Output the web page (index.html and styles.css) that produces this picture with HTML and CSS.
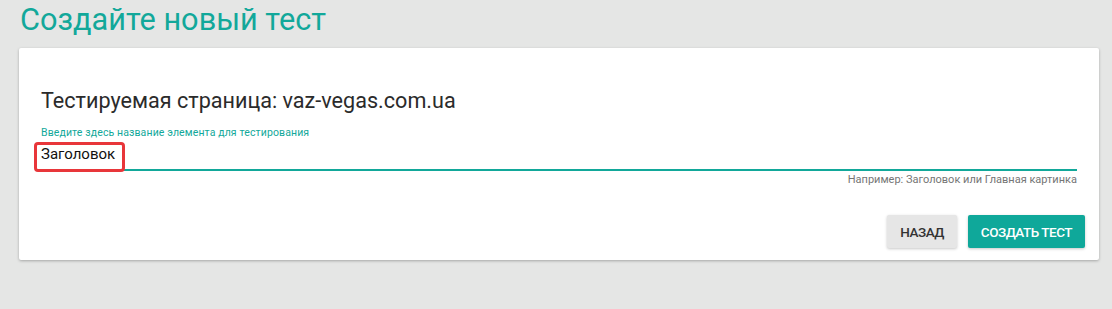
FILE: index.html
```html
<!DOCTYPE html>
<html lang="ru">
<head>
<meta charset="utf-8">
<title>Создайте новый тест</title>
<link rel="stylesheet" href="styles.css">
</head>
<body>
  <h1 class="page-title">Создайте новый тест</h1>
  <div class="card">
    <h2 class="card-heading">Тестируемая страница: vaz-vegas.com.ua</h2>
    <div class="field">
      <label class="field-label">Введите здесь название элемента для тестирования</label>
      <div class="field-input">
        <span class="field-value">Заголовок</span>
        <span class="highlight"></span>
      </div>
      <div class="field-hint">Например: Заголовок или Главная картинка</div>
    </div>
    <div class="actions">
      <button class="btn btn-flat">Назад</button>
      <button class="btn btn-primary">Создать тест</button>
    </div>
  </div>
</body>
</html>
```

FILE: styles.css
```css
html, body {
  margin: 0;
  padding: 0;
}
body {
  background: #e5e6e5;
  font-family: Roboto, "Liberation Sans", Arial, sans-serif;
  width: 1112px;
  height: 309px;
  overflow: hidden;
}
.page-title {
  margin: 0;
  padding: 2px 0 0 20px;
  font-size: 30.7px;
  line-height: 36px;
  font-weight: 400;
  color: #12a89a;
}
.card {
  margin: 10px 13px 0 19px;
  background: #fff;
  border-radius: 2px;
  box-shadow: 0 1px 3px rgba(0,0,0,0.28);
  padding: 40px 14px 12px 22px;
}
.card-heading {
  margin: 0;
  font-size: 21.6px;
  line-height: 26px;
  font-weight: 400;
  color: #2b2b2b;
}
.field {
  margin-top: 13px;
  padding-right: 8px;
}
.field-label {
  display: block;
  font-size: 10.5px;
  letter-spacing: 0.12px;
  line-height: 12px;
  color: #12a89a;
}
.field-input {
  position: relative;
  margin-top: 6px;
  padding-bottom: 6px;
  border-bottom: 2px solid #12a89a;
  font-size: 15px;
  line-height: 18px;
  color: #111;
}
.highlight {
  position: absolute;
  left: -7px;
  top: -3px;
  width: 85px;
  height: 24px;
  border: 3px solid #e8363a;
  border-radius: 4px;
}
.field-hint {
  margin-top: 3px;
  text-align: right;
  font-size: 11px;
  line-height: 12px;
  color: #757575;
}
.actions {
  margin-top: 29px;
  display: flex;
  justify-content: flex-end;
  gap: 11px;
}
.btn {
  height: 33px;
  border: none;
  border-radius: 2px;
  padding: 0 13px;
  font-family: inherit;
  font-size: 13.5px;
  font-weight: 500;
  letter-spacing: -0.5px;
  text-transform: uppercase;
  box-shadow: 0 1px 3px rgba(0,0,0,0.22);
}
.btn-flat {
  background: #e6e6e6;
  color: #333;
}
.btn-primary {
  background: #0fa89a;
  color: #fff;
}
```
